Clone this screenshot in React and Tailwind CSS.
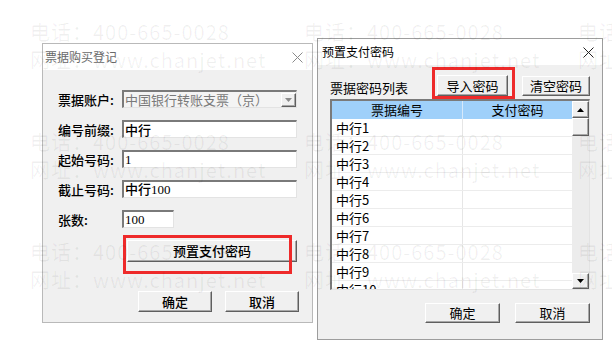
import React from 'react'

const sunken = 'border-t-2 border-l-2 border-b border-r border-t-[#7a7a7a] border-l-[#7a7a7a] border-b-[#e3e3e3] border-r-[#e3e3e3]'
const raised = 'border border-t-white border-l-white border-b-[#5f5f5f] border-r-[#5f5f5f] bg-[#f0f0f0] shadow-[inset_-1px_-1px_0_#a8a8a8]'

const CloseX = ({ color }) => (
  <svg width="11" height="11" viewBox="0 0 11 11">
    <path d="M0.5 0.5L10.5 10.5M10.5 0.5L0.5 10.5" stroke={color} strokeWidth="1" />
  </svg>
)

const Btn = ({ children, className }) => (
  <div className={`flex items-center justify-center text-[13px] text-black ${raised} ${className}`}>{children}</div>
)

const Arrow = ({ down }) => (
  <svg width="7" height="4" viewBox="0 0 7 4">
    <path d={down ? 'M0 0H7L3.5 4Z' : 'M0 4H7L3.5 0Z'} fill="#000" />
  </svg>
)

const rows = ['中行1', '中行2', '中行3', '中行4', '中行5', '中行6', '中行7', '中行8', '中行9', '中行10']

function Watermark() {
  const tiles = Array.from({ length: 12 })
  return (
    <div className="pointer-events-none absolute inset-0 overflow-hidden">
      <div className="absolute left-[30px] top-[18px] grid grid-cols-[repeat(3,274px)] auto-rows-[110px]">
        {tiles.map((_, i) => (
          <div key={i} className="text-[20px] leading-[28px] tracking-[1px] text-black/[0.06] whitespace-nowrap">
            <div>电话：400-665-0028</div>
            <div>网址：www.chanjet.net</div>
          </div>
        ))}
      </div>
    </div>
  )
}

function FormRow({ label, children }) {
  return (
    <div className="flex h-[18px] items-center">
      <div className="w-[64px] text-[13px] font-medium leading-none text-black">{label}</div>
      {children}
    </div>
  )
}

export default function App() {
  return (
    <div className="relative h-[353px] w-[612px] overflow-hidden bg-white font-['Noto_Sans_CJK_SC',sans-serif]">
      <div className="flex items-start pl-[42px]">
        {/* 票据购买登记 */}
        <div className="mt-[43px] flex h-[280px] w-[271px] flex-col border border-[#b9b9b9] bg-[#f0f0f0]">
          <div className="flex h-[26px] items-center justify-between bg-white pl-[2px] pr-[9px] text-[12px] text-[#6a6a6a]">
            <span>票据购买登记</span>
            <CloseX color="#8a8a8a" />
          </div>
          <div className="flex flex-1 flex-col pl-[15px] pt-[20px]">
            <div className="flex flex-col gap-[12px]">
              <FormRow label="票据账户:">
                <div className={`flex h-[18px] w-[175px] items-center justify-between bg-[#f4f4f4] ${sunken}`}>
                  <span className="pl-[1px] text-[13px] leading-none text-[#7a7a7a]">中国银行转账支票（京）</span>
                  <div className={`flex h-[14px] w-[15px] items-center justify-center ${raised}`}>
                    <svg width="7" height="4" viewBox="0 0 7 4"><path d="M0 0H7L3.5 4Z" fill="#8a8a8a" /></svg>
                  </div>
                </div>
              </FormRow>
              <FormRow label="编号前缀:">
                <div className={`flex h-[18px] w-[175px] items-center bg-white pl-[1px] text-[13px] font-medium leading-none ${sunken}`}>中行</div>
              </FormRow>
              <FormRow label="起始号码:">
                <div className={`flex h-[18px] w-[175px] items-center bg-white pl-[1px] font-['Liberation_Serif','Noto_Sans_CJK_SC',serif] text-[13px] leading-none ${sunken}`}>1</div>
              </FormRow>
              <FormRow label="截止号码:">
                <div className={`flex h-[18px] w-[175px] items-center bg-white pl-[1px] font-['Liberation_Serif','Noto_Sans_CJK_SC',serif] text-[13px] font-medium leading-none ${sunken}`}>中行100</div>
              </FormRow>
              <FormRow label="张数:">
                <div className={`flex h-[18px] w-[52px] items-center bg-white pl-[1px] font-['Liberation_Serif',serif] text-[13px] leading-none ${sunken}`}>100</div>
              </FormRow>
            </div>
            <div className="relative ml-[69px] mt-[12px] w-[170px]">
              <Btn className="h-[22px] w-[170px] font-medium">预置支付密码</Btn>
              <div className="absolute left-[-4px] top-[-5px] h-[39px] w-[169px] border-[3px] border-[#ee2a2a]" />
            </div>
            <div className="mt-[29px] flex justify-end gap-[13px] pr-[13px]">
              <Btn className="h-[21px] w-[74px] font-medium">确定</Btn>
              <Btn className="h-[21px] w-[74px] font-medium">取消</Btn>
            </div>
          </div>
        </div>

        {/* 预置支付密码 */}
        <div className="ml-[4px] mt-[38px] flex h-[302px] w-[286px] flex-col border border-[#9d9d9d] bg-[#f0f0f0]">
          <div className="flex h-[26px] items-center justify-between bg-white pl-[4px] pr-[8px] text-[12px] text-black">
            <span>预置支付密码</span>
            <CloseX color="#222" />
          </div>
          <div className="flex flex-1 flex-col pl-[12px] pr-[11px] pt-[10px]">
            <div className="flex h-[21px] items-end">
              <span className="w-[107px] text-[13px] leading-[16px] text-black">票据密码列表</span>
              <div className="relative">
                <Btn className="h-[21px] w-[71px]">导入密码</Btn>
                <div className="absolute left-[-5px] top-[-8px] h-[32px] w-[83px] border-[3px] border-[#ee2a2a]" />
              </div>
              <Btn className="ml-[14px] h-[20px] w-[68px]">清空密码</Btn>
            </div>
            <div className={`mt-[3px] flex h-[191px] w-[260px] overflow-hidden bg-white ${sunken}`}>
              <div className="flex w-[240px] flex-col">
                <div className="flex h-[18px] shrink-0 bg-[#9fd0fa] text-[13px] leading-[18px] text-black">
                  <div className="w-[131px] border-r border-[#d6e9fb] text-center">票据编号</div>
                  <div className="flex-1 text-center">支付密码</div>
                </div>
                {rows.map((r) => (
                  <div key={r} className="flex h-[18px] shrink-0 border-b border-[#ececec] text-[13px] leading-[17px] text-black">
                    <div className="w-[131px] border-r border-[#e6e6e6] pl-[4px]">{r}</div>
                    <div className="flex-1" />
                  </div>
                ))}
              </div>
              <div className="flex w-[17px] flex-col bg-[#ececec]">
                <div className={`flex h-[17px] shrink-0 items-center justify-center ${raised}`}><Arrow /></div>
                <div className={`h-[18px] shrink-0 ${raised}`} />
                <div className="flex-1" />
                <div className={`flex h-[16px] shrink-0 items-center justify-center ${raised}`}><Arrow down /></div>
              </div>
            </div>
            <div className="mt-[13px] flex justify-end gap-[15px] pr-[1px]">
              <Btn className="h-[20px] w-[75px]">确定</Btn>
              <Btn className="h-[20px] w-[75px]">取消</Btn>
            </div>
          </div>
        </div>
      </div>
      <Watermark />
    </div>
  )
}
